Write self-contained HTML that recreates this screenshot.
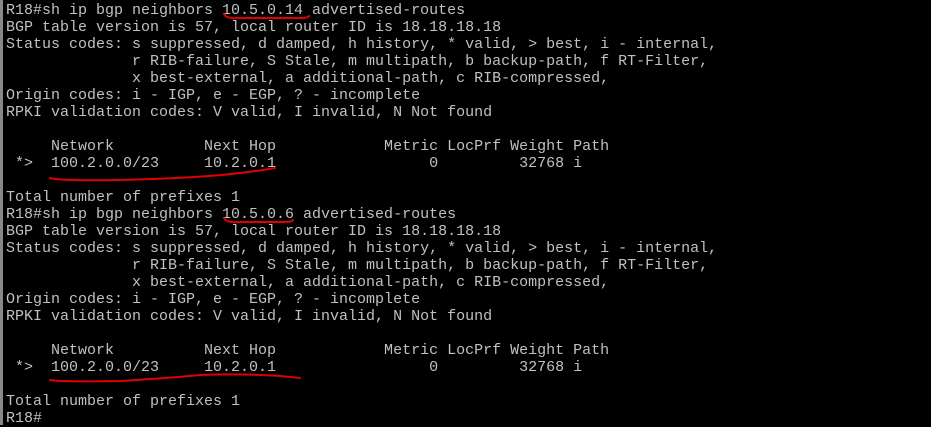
<!DOCTYPE html>
<html><head><style>
html,body{margin:0;padding:0;background:#000;width:931px;height:425px;overflow:hidden}
.b{position:absolute;left:0;top:0;width:3px;height:425px;background:#888}
pre{position:absolute;left:6px;top:2px;margin:0;font-family:"Liberation Mono",monospace;font-size:15px;line-height:17px;color:#c0c0c0}
svg{position:absolute;left:0;top:0}
</style></head><body>
<div class="b"></div>
<pre>R18#sh ip bgp neighbors 10.5.0.14 advertised-routes
BGP table version is 57, local router ID is 18.18.18.18
Status codes: s suppressed, d damped, h history, * valid, &gt; best, i - internal,
              r RIB-failure, S Stale, m multipath, b backup-path, f RT-Filter,
              x best-external, a additional-path, c RIB-compressed,
Origin codes: i - IGP, e - EGP, ? - incomplete
RPKI validation codes: V valid, I invalid, N Not found

     Network          Next Hop            Metric LocPrf Weight Path
 *&gt;  100.2.0.0/23     10.2.0.1                 0         32768 i

Total number of prefixes 1
R18#sh ip bgp neighbors 10.5.0.6 advertised-routes
BGP table version is 57, local router ID is 18.18.18.18
Status codes: s suppressed, d damped, h history, * valid, &gt; best, i - internal,
              r RIB-failure, S Stale, m multipath, b backup-path, f RT-Filter,
              x best-external, a additional-path, c RIB-compressed,
Origin codes: i - IGP, e - EGP, ? - incomplete
RPKI validation codes: V valid, I invalid, N Not found

     Network          Next Hop            Metric LocPrf Weight Path
 *&gt;  100.2.0.0/23     10.2.0.1                 0         32768 i

Total number of prefixes 1
R18#</pre>
<svg width="931" height="425" fill="none" stroke="#e00000" stroke-width="2" stroke-linecap="round">
<path d="M224 14 Q226 19 240 18 L300 18 Q308 18 309 16"/>
<path d="M50 178 Q60 181 120 180 Q200 178 240 173 Q265 170 275 168"/>
<path d="M224 218 Q226 223 240 222 L285 222 Q292 222 293 220"/>
<path d="M50 380 Q60 382 120 381 Q170 378 200 375 Q260 373 300 378"/>
</svg>
</body></html>
